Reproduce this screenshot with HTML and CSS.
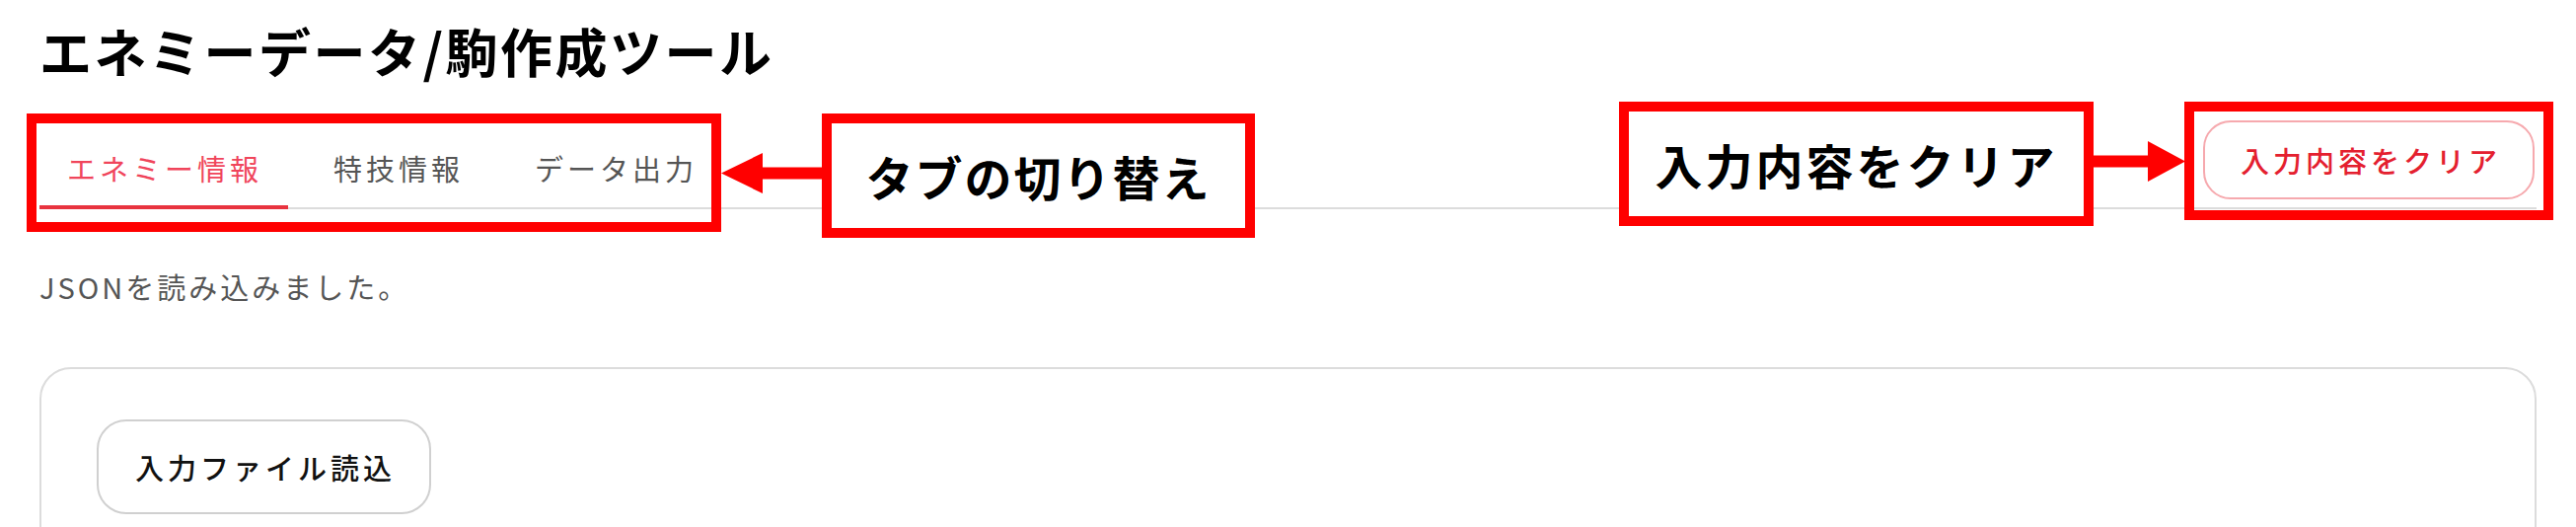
FILE: index.html
```html
<!DOCTYPE html>
<html lang="ja">
<head>
    <meta charset="UTF-8">
    <title>エネミーデータ/駒作成ツール</title>
    <link rel="stylesheet" href="styles.css">
</head>
<body>
    <div class="page">
        <h1 class="title">エネミーデータ/駒作成ツール</h1>

        <!-- タブと操作ボタン -->
        <div class="toolbar">
            <nav class="tabs">
                <button class="tab active">エネミー情報</button>
                <button class="tab">特技情報</button>
                <button class="tab">データ出力</button>
            </nav>
            <button class="clear-btn">入力内容をクリア</button>
        </div>

        <p class="status">JSONを読み込みました。</p>

        <!-- エネミー情報パネル -->
        <section class="panel">
            <button class="file-btn">入力ファイル読込</button>
        </section>
    </div>

    <!-- 説明用の注釈 -->
    <div class="note-frame note-tabs"></div>
    <svg class="note-arrow arrow-tabs" width="104" height="41" viewBox="0 0 104 41">
        <path d="M0 20.5 L42 0 L42 14.5 L104 14.5 L104 26.5 L42 26.5 L42 41 Z" fill="#ff0000"/>
    </svg>
    <div class="note-label label-tabs">タブの切り替え</div>

    <div class="note-label label-clear">入力内容をクリア</div>
    <svg class="note-arrow arrow-clear" width="93" height="41" viewBox="0 0 93 41">
        <path d="M0 14.5 L55 14.5 L55 0 L93 20.5 L55 41 L55 26.5 L0 26.5 Z" fill="#ff0000"/>
    </svg>
    <div class="note-frame note-clear"></div>
</body>
</html>
```

FILE: styles.css
```css
body {
    position: relative;
    margin: 0;
    font-family: 'Noto Sans CJK JP', 'Noto Sans', sans-serif;
    background-color: #fff;
    color: #222;
}

.page {
    padding: 0 40px;
}

/* タイトル */
.title {
    margin: 0;
    padding-top: 20px;
    font-size: 53px;
    line-height: 62px;
    font-weight: 700;
    letter-spacing: 2.5px;
    color: #000;
}

/* タブ */
.toolbar {
    display: flex;
    justify-content: space-between;
    align-items: flex-start;
    margin-top: 40px;
    border-bottom: 2px solid #dcdcdc;
}

.tabs {
    display: flex;
    gap: 18px;
}

.tab {
    margin-bottom: -2px;
    padding: 28px 26px 18px 28px;
    border: none;
    border-bottom: 4px solid transparent;
    background: none;
    font-family: inherit;
    font-size: 29px;
    line-height: 40px;
    letter-spacing: 4px;
    color: #555;
    cursor: pointer;
}

.tab.active {
    color: #f0455b;
    border-bottom-color: #e8333f;
}

.clear-btn {
    height: 80px;
    margin-right: 2px;
    padding: 0 32px 0 36px;
    border: 2px solid #f6a9ae;
    border-radius: 28px;
    background: #fff;
    font-family: inherit;
    font-size: 29px;
    font-weight: 500;
    letter-spacing: 4px;
    color: #e4202f;
    cursor: pointer;
}

.status {
    margin: 58px 0 0;
    font-size: 29px;
    line-height: 40px;
    letter-spacing: 3px;
    color: #555;
}

/* 入力パネル */
.panel {
    margin-top: 62px;
    padding: 51px 56px;
    border: 2px solid #dcdcdc;
    border-radius: 32px;
    min-height: 300px;
}

.file-btn {
    height: 96px;
    padding: 0 34px 0 37px;
    border: 2px solid #d0d0d0;
    border-radius: 30px;
    background: #fff;
    font-family: inherit;
    font-size: 29px;
    font-weight: 500;
    letter-spacing: 4px;
    color: #111;
    cursor: pointer;
}

/* 注釈 */
.note-frame,
.note-label {
    position: absolute;
    box-sizing: border-box;
    border: 10px solid #ff0000;
}

.note-label {
    display: flex;
    align-items: center;
    justify-content: center;
    background: #fff;
    font-size: 48px;
    font-weight: 700;
    color: #000;
}

.note-tabs {
    left: 27px;
    top: 115px;
    width: 704px;
    height: 120px;
}

.label-tabs {
    left: 833px;
    top: 115px;
    width: 439px;
    height: 126px;
    letter-spacing: 2px;
}

.label-clear {
    left: 1641px;
    top: 103px;
    width: 481px;
    height: 126px;
    letter-spacing: 3px;
}

.note-clear {
    left: 2214px;
    top: 103px;
    width: 374px;
    height: 120px;
}

.note-arrow {
    position: absolute;
    display: block;
}

.arrow-tabs {
    left: 731px;
    top: 155px;
}

.arrow-clear {
    left: 2122px;
    top: 143px;
}
```
